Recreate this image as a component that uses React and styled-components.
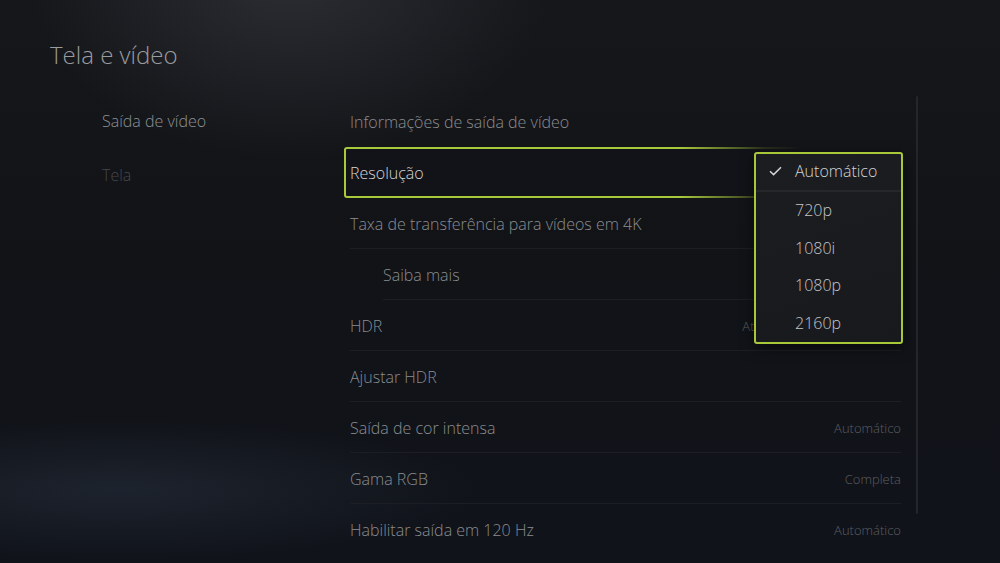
import React from "react";
import styled, { createGlobalStyle } from "styled-components";

const GlobalStyle = createGlobalStyle`
  html, body {
    margin: 0;
    padding: 0;
    background: #0f1115;
  }
  body {
    font-family: "Open Sans", "Noto Sans", sans-serif;
  }
`;

const Screen = styled.div`
  width: 1000px;
  height: 563px;
  overflow: hidden;
  background:
    radial-gradient(ellipse 260px 180px at 290px -20px, rgba(120, 122, 130, 0.22), rgba(120, 122, 130, 0) 100%),
    radial-gradient(ellipse 360px 70px at 120px 490px, rgba(70, 86, 110, 0.24), rgba(70, 86, 110, 0) 100%),
    linear-gradient(180deg, #16171b 0%, #111317 45%, #10131a 100%);
  color: #8c8e92;
`;

const Header = styled.header`
  height: 96px;
  padding-left: 50px;
  display: flex;
  align-items: flex-start;
  padding-top: 38px;
  box-sizing: border-box;
`;

const Title = styled.h1`
  margin: 0;
  font-size: 24px;
  font-weight: 300;
  color: #9a9b9f;
  letter-spacing: 0;
`;

const Main = styled.div`
  display: flex;
  align-items: flex-start;
`;

const Nav = styled.nav`
  width: 344px;
  padding-left: 102px;
  box-sizing: border-box;
  display: flex;
  flex-direction: column;
`;

const NavItem = styled.div`
  height: 54px;
  line-height: 50px;
  font-size: 16px;
  font-weight: 300;
  color: ${(p) => (p.$active ? "#8e9094" : "#45474c")};
`;

const List = styled.div`
  width: 560px;
  display: flex;
  flex-direction: column;
`;

const Row = styled.div`
  position: relative;
  height: 51px;
  box-sizing: border-box;
  display: flex;
  align-items: center;
  justify-content: space-between;
  padding: 0 3px 0 ${(p) => (p.$indent ? "39px" : "6px")};
  &::after {
    content: "";
    position: absolute;
    left: ${(p) => (p.$indent ? "39px" : "6px")};
    right: 3px;
    bottom: 0;
    height: 1px;
    background: ${(p) => (p.$noLine ? "transparent" : "#1c1e23")};
  }
`;

const FocusRow = styled(Row)`
  border-radius: 3px;
  border: 2px solid transparent;
  padding-left: 4px;
  background:
    linear-gradient(#121318, #121318) padding-box,
    linear-gradient(90deg, #a9c93c 0%, #a9c93c 60%, rgba(169, 201, 60, 0.15) 75%, rgba(169, 201, 60, 0) 82%) border-box;
  &::after {
    display: none;
  }
`;

const Label = styled.span`
  font-size: 16px;
  font-weight: 300;
  color: ${(p) => (p.$focus ? "#d4d5d7" : "#8a8c90")};
`;

const Value = styled.span`
  font-size: 13px;
  font-weight: 300;
  color: #5c5e63;
`;

const Dropdown = styled.div`
  position: absolute;
  right: -1px;
  top: 3px;
  width: 149px;
  box-sizing: border-box;
  border: 2px solid #a8c83a;
  border-radius: 3px;
  background: linear-gradient(160deg, #1c1d21 0%, #18191d 100%);
  box-shadow: 0 4px 14px rgba(0, 0, 0, 0.5);
  z-index: 2;
`;

const Option = styled.div`
  display: flex;
  align-items: center;
  height: 37.5px;
  box-sizing: border-box;
  padding-left: 12px;
  gap: 13px;
  font-size: 16px;
  font-weight: 300;
  color: ${(p) => (p.$selected ? "#d2d3d5" : "#c4c5c8")};
  border-bottom: ${(p) => (p.$selected ? "2px solid #25272b" : "none")};
  padding-bottom: ${(p) => (p.$selected ? "2px" : "0")};
  margin-top: ${(p) => (p.$first ? "0" : "0")};
`;

const Check = styled.span`
  width: 14px;
  display: inline-flex;
  justify-content: center;
`;

const Scrollbar = styled.div`
  width: 2px;
  height: 418px;
  margin-left: 12px;
  background: #24262b;
  border-radius: 1px;
`;

const resolutions = ["Automático", "720p", "1080i", "1080p", "2160p"];

export default function App() {
  return (
    <Screen>
      <GlobalStyle />
      <Header>
        <Title>Tela e vídeo</Title>
      </Header>
      <Main>
        <Nav>
          <NavItem $active>Saída de vídeo</NavItem>
          <NavItem>Tela</NavItem>
        </Nav>
        <List>
          <Row $noLine>
            <Label>Informações de saída de vídeo</Label>
          </Row>
          <FocusRow>
            <Label $focus>Resolução</Label>
            <Dropdown>
              {resolutions.map((r, i) => (
                <Option key={r} $selected={i === 0}>
                  <Check>
                    {i === 0 && (
                      <svg width="13" height="10" viewBox="0 0 13 10">
                        <path d="M1 5.2 L4.6 8.6 L12 1.2" fill="none" stroke="#d2d3d5" strokeWidth="1.5" />
                      </svg>
                    )}
                  </Check>
                  {r}
                </Option>
              ))}
            </Dropdown>
          </FocusRow>
          <Row>
            <Label>Taxa de transferência para vídeos em 4K</Label>
          </Row>
          <Row $indent>
            <Label>Saiba mais</Label>
          </Row>
          <Row>
            <Label>HDR</Label>
            <Value>Ativado quando compatível</Value>
          </Row>
          <Row>
            <Label>Ajustar HDR</Label>
          </Row>
          <Row>
            <Label>Saída de cor intensa</Label>
            <Value>Automático</Value>
          </Row>
          <Row>
            <Label>Gama RGB</Label>
            <Value>Completa</Value>
          </Row>
          <Row $noLine>
            <Label>Habilitar saída em 120 Hz</Label>
            <Value>Automático</Value>
          </Row>
        </List>
        <Scrollbar />
      </Main>
    </Screen>
  );
}
